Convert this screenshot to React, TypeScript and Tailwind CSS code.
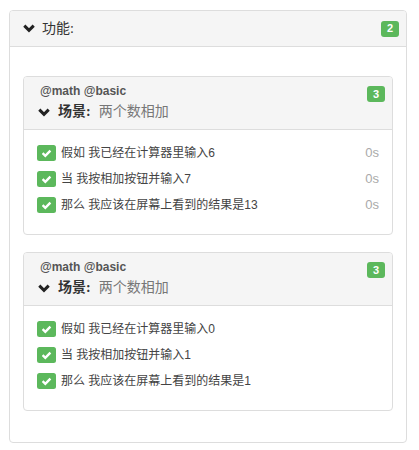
// Feature report — a Cucumber-style feature panel with its scenarios and steps.

const SANS = 'font-["Liberation_Sans","Noto_Sans_CJK_SC",sans-serif]'

type Step = { text: string; time?: string }
type Scenario = { tags: string; name: string; steps: Step[] }

const scenarios: Scenario[] = [
  {
    tags: '@math @basic',
    name: '两个数相加',
    steps: [
      { text: '假如 我已经在计算器里输入6', time: '0s' },
      { text: '当 我按相加按钮并输入7', time: '0s' },
      { text: '那么 我应该在屏幕上看到的结果是13', time: '0s' },
    ],
  },
  {
    tags: '@math @basic',
    name: '两个数相加',
    steps: [
      { text: '假如 我已经在计算器里输入0' },
      { text: '当 我按相加按钮并输入1' },
      { text: '那么 我应该在屏幕上看到的结果是1' },
    ],
  },
]

function Chevron() {
  return (
    <svg width="12" height="9" viewBox="0 0 12 9" className="shrink-0">
      <path d="M1.3 1.6 L6 6.3 L10.7 1.6" fill="none" stroke="#222" strokeWidth="3" />
    </svg>
  )
}

function Badge({ n }: { n: number }) {
  return (
    <span
      className={`flex h-[16px] w-[18px] items-center justify-center rounded-[3px] bg-[#5cb85c] text-[11px] font-bold leading-none text-white ${SANS}`}
    >
      {n}
    </span>
  )
}

function PassIcon() {
  return (
    <svg width="19" height="16" viewBox="0 0 19 16" className="shrink-0">
      <rect x="0" y="0" width="19" height="16" rx="2.5" fill="#5cb85c" />
      <path d="M5.6 8.2 L8.3 10.8 L13.4 5.6" fill="none" stroke="#fff" strokeWidth="2.4" />
    </svg>
  )
}

function ScenarioPanel({ s }: { s: Scenario }) {
  return (
    <div className="overflow-hidden rounded-[4px] border border-[#dddddd] bg-white">
      <div className="relative h-[53px] border-b border-[#dddddd] bg-[#f5f5f5] pl-[14px] pt-[6px]">
        <div className={`pl-[2px] text-[12px] font-bold leading-[16px] text-[#555] ${SANS}`}>{s.tags}</div>
        <div className="mt-[3px] flex items-center gap-[8px]">
          <Chevron />
          <span className='font-["Liberation_Serif","Noto_Sans_CJK_SC",serif] text-[14px] leading-[20px]'>
            <span className="font-bold text-[#333]">场景:</span>
            <span className="ml-[8px] text-[#777]">{s.name}</span>
          </span>
        </div>
        <div className="absolute right-[7px] top-[9px]">
          <Badge n={s.steps.length} />
        </div>
      </div>
      <div className="px-[13px] pb-[16px] pt-[10px]">
        {s.steps.map((st, i) => (
          <div key={i} className={`flex h-[26px] items-center ${SANS}`}>
            <PassIcon />
            <span className="ml-[5px] flex-1 text-[12px] text-[#444]">{st.text}</span>
            {st.time && <span className="text-[13px] text-[#aaa]">{st.time}</span>}
          </div>
        ))}
      </div>
    </div>
  )
}

export default function App() {
  return (
    <div className="ml-[9px] mt-[10px] w-[398px]">
      <div className="overflow-hidden rounded-[4px] border border-[#dddddd] bg-white">
        <div className="flex h-[36px] items-center justify-between border-b border-[#dddddd] bg-[#f5f5f5] pl-[13px] pr-[7px]">
          <div className="flex items-center gap-[7px]">
            <Chevron />
            <span className='font-["Liberation_Serif","Noto_Sans_CJK_SC",serif] text-[14px] text-[#333]'>
              功能:
            </span>
          </div>
          <Badge n={2} />
        </div>
        <div className="flex flex-col gap-[17px] px-[13px] pb-[31px] pt-[29px]">
          {scenarios.map((s, i) => (
            <ScenarioPanel key={i} s={s} />
          ))}
        </div>
      </div>
    </div>
  )
}
